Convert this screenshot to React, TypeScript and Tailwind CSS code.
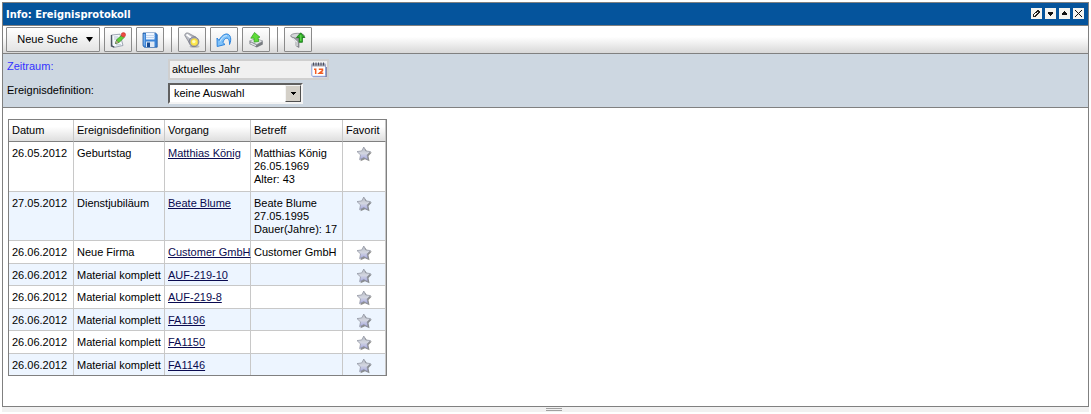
import { useState } from "react";
import type { ReactNode } from "react";

type EventRow = {
  date: string;
  definition: string;
  link: string;
  subject: string[];
};

const ROWS: EventRow[] = [
  { date: "26.05.2012", definition: "Geburtstag", link: "Matthias König", subject: ["Matthias König", "26.05.1969", "Alter: 43"] },
  { date: "27.05.2012", definition: "Dienstjubiläum", link: "Beate Blume", subject: ["Beate Blume", "27.05.1995", "Dauer(Jahre): 17"] },
  { date: "26.06.2012", definition: "Neue Firma", link: "Customer GmbH", subject: ["Customer GmbH"] },
  { date: "26.06.2012", definition: "Material komplett", link: "AUF-219-10", subject: [] },
  { date: "26.06.2012", definition: "Material komplett", link: "AUF-219-8", subject: [] },
  { date: "26.06.2012", definition: "Material komplett", link: "FA1196", subject: [] },
  { date: "26.06.2012", definition: "Material komplett", link: "FA1150", subject: [] },
  { date: "26.06.2012", definition: "Material komplett", link: "FA1146", subject: [] },
];

const COLUMNS = ["Datum", "Ereignisdefinition", "Vorgang", "Betreff", "Favorit"];

function EditIcon() {
  return (
    <svg width="16" height="16" viewBox="0 0 16 16">
      <path d="M1.500 3l8.500-.8 3 11.300-8.500 1.800L2 14z" fill="#f4f7fb" stroke="#8a93a3" strokeWidth=".8" />
      <path d="M1.500 3v11l2.800 1.200" fill="none" stroke="#4b5563" strokeWidth="1.400" />
      <path d="M4 5h4M4 7h3M6 12.800h5" stroke="#a9b8cc" strokeWidth=".8" />
      <path d="M5.500 11.500l1.300-4L12 3l2.300 2.300-5 5z" fill="#5fd03a" stroke="#2c8f20" strokeWidth=".7" />
      <path d="M5.500 11.500l1-3.200 2.200 2.200z" fill="#f0d9a0" stroke="#444" strokeWidth=".5" />
      <circle cx="13.400" cy="2.800" r="2.200" fill="#ee4a42" stroke="#c02a24" strokeWidth=".5" />
    </svg>
  );
}

function SaveIcon() {
  return (
    <svg width="16" height="16" viewBox="0 0 16 16">
      <path d="M1 1h12.500L15.200 2.500v12.700H2.500L1 13.800z" fill="#3d85d8" stroke="#1e55a0" strokeWidth=".8" />
      <path d="M4 1h8.500v6.500H4z" fill="#eef5ff" />
      <path d="M4 3.500h8.500M4 5.500h8.500" stroke="#c4d6ec" />
      <path d="M4 9.500h8.500V15H4z" fill="#dfe8f4" />
      <path d="M5 10.500h3V15H5z" fill="#174a92" />
      <path d="M2.200 2v11.500" stroke="#8fc0f4" />
    </svg>
  );
}

function FlashlightIcon() {
  return (
    <svg width="16" height="16" viewBox="0 0 16 16">
      <ellipse cx="10.500" cy="14.500" rx="5" ry="1.300" fill="#000" opacity=".2" />
      <path d="M.8 3.500C.6 1.500 2.600.3 4.500 1.200l7.500 4-6.500 6z" fill="#b9bcc4" stroke="#85888f" strokeWidth=".8" />
      <path d="M2.500 2.500l6.500 4.700" stroke="#fff" strokeWidth="2" />
      <circle cx="10" cy="9.800" r="4.900" fill="#a9acc0" stroke="#686a78" strokeWidth=".7" />
      <circle cx="10.300" cy="10.100" r="3.500" fill="#ffe94d" stroke="#d9bc2c" strokeWidth=".5" />
      <circle cx="9.800" cy="9.600" r="1.700" fill="#fffbc2" />
    </svg>
  );
}

function UndoIcon() {
  return (
    <svg width="16" height="16" viewBox="0 0 16 16">
      <path
        d="M1 6l2 2.500C5 4.500 8 1.800 11 2c3.800.5 4.800 5.500 2.500 10.500.2-3.800-.8-6.300-2.800-6.300-1.500 0-2.900 1.500-3.900 4.200L9 12.500l-7.800 2z"
        fill="#7fc2fa"
        stroke="#2b82dc"
        strokeLinejoin="round"
      />
      <path d="M4 9.500C6 5.500 8.500 3.500 11 3.700" fill="none" stroke="#cde9ff" />
    </svg>
  );
}

function ExportIcon() {
  return (
    <svg width="16" height="16" viewBox="0 0 16 16">
      <path d="M1.500 9l6.500-2.500L14.800 9v3.500L8.800 15.500 1.500 12z" fill="#777b80" />
      <path d="M1.500 9L8 6.500 14.800 9l-6 3.500z" fill="#e8eaec" stroke="#96999f" strokeWidth=".6" />
      <path d="M2.500 11l5.500 2.700" stroke="#e3e5e8" strokeWidth="1.400" />
      <path d="M6.500.5l5.500 4.700-2 .3.800 4-4.600.6-.3-4-3.100.1z" fill="#5fdc38" stroke="#2c9a1d" strokeWidth=".7" strokeLinejoin="round" />
    </svg>
  );
}

function FilterIcon() {
  return (
    <svg width="16" height="16" viewBox="0 0 16 16">
      <path d="M.8 4l5.200 5.500v4.300l3 1.700v-6L14.500 4z" fill="#94979c" stroke="#6c6f74" strokeWidth=".6" />
      <path d="M2.500 6l4.500 4v4" fill="none" stroke="#eceef0" strokeWidth="1.200" />
      <ellipse cx="7.500" cy="3.700" rx="6.700" ry="2.400" fill="#d4d6d9" stroke="#777a7f" strokeWidth=".7" />
      <path d="M10.700.8l4.200 4.700h-2.500v4.800H9.200V5.500H6.500z" fill="#2fae27" stroke="#127512" strokeWidth=".8" />
      <path d="M10.800 3v6" stroke="#6fe05c" />
    </svg>
  );
}

function CalendarIcon() {
  return (
    <svg width="16" height="16" viewBox="0 0 16 16">
      <path d="M2 14.500h13.500V5" fill="none" stroke="#8688a8" strokeWidth="1.500" />
      <rect x=".8" y="2" width="13.700" height="12.300" rx="1" fill="#fff" stroke="#8fa3dc" />
      <path d="M.5 1.500h14V4.500H.5z" fill="#a4a7b4" />
      <path d="M2.500.5v3M5 .5v3M7.500.5v3M10 .5v3M12.500.5v3" stroke="#4a4d5a" />
      <path d="M3 7.200h1.700V12M7.800 7.200h3.700v1.500L8.300 11.300h4" fill="none" stroke="#f25c22" strokeWidth="1.500" />
    </svg>
  );
}

function StarIcon() {
  return (
    <svg width="16" height="16" viewBox="0 0 16 16">
      <defs>
        <linearGradient id="star" x1="0" y1="0" x2="0" y2="1">
          <stop offset="0" stopColor="#b4b8c2" />
          <stop offset=".5" stopColor="#d3d6e0" />
          <stop offset="1" stopColor="#a6a8e4" />
        </linearGradient>
      </defs>
      <path d="M9 2.500l2.200 3.300 4.600.7-3.300 3.400 1 5.300-4.500-2-4.500 2 1-5z" fill="#444" opacity=".6" />
      <path
        d="M7.800 1l2 3.900 4.700.7-3.400 3.300.9 4.800-4.200-2.100-4.200 2.100.9-4.800L1 5.600l4.700-.7z"
        fill="url(#star)"
        stroke="#8d909e"
        strokeWidth=".7"
        strokeLinejoin="round"
      />
    </svg>
  );
}

function ToolButton({ label, children }: { label: string; children: ReactNode }) {
  return (
    <button
      aria-label={label}
      className="flex h-[25px] w-7 items-center justify-center rounded-[1px] border border-[#8a8a8a] bg-linear-to-b from-white to-[#e4e4e4]"
    >
      {children}
    </button>
  );
}

function Separator() {
  return <div className="mr-0.5 ml-[3px] h-[25px] w-px bg-[#8a8a8a]" />;
}

function WindowButton({ label, children }: { label: string; children: ReactNode }) {
  return (
    <button aria-label={label} className="flex size-[11px] items-center justify-center bg-[#f4f4f0]">
      <svg width="9" height="9" viewBox="0 0 9 9" shapeRendering="crispEdges">
        {children}
      </svg>
    </button>
  );
}

export default function App() {
  const [range, setRange] = useState("aktuelles Jahr");

  return (
    <div className="px-0.5 pt-0.5 font-['Liberation_Sans',Arial,sans-serif] text-[11px] leading-[13px] text-black">
      <main className="border border-[#808080] bg-white">
        {/* Title bar */}
        <header className="flex h-[22px] items-center justify-between bg-[#05549c] pr-1 pl-[3px]">
          <h1 className="font-['DejaVu_Sans_Condensed','DejaVu_Sans',sans-serif] font-bold text-white">Info: Ereignisprotokoll</h1>
          <div className="flex gap-[3px] pb-0.5">
            <WindowButton label="Bearbeiten">
              <path d="M5 1h2v1h1v2H7v1H6v1H5v1H4v1H1V5h1V4h1V3h1V2h1z" fill="#222" />
              <path d="M5 3h1v1H5v1H4v1H3v1H2V5h1V4h2z" fill="#f4f4f0" />
            </WindowButton>
            <WindowButton label="Minimieren">
              <path d="M2 3h5v2H6v1H5v1H4V6H3V5H2z" fill="#111" />
            </WindowButton>
            <WindowButton label="Maximieren">
              <path d="M4 2h1v1h1v1h1v2H2V4h1V3h1z" fill="#111" />
            </WindowButton>
            <WindowButton label="Schließen">
              <path d="M1 1h1v1h1v1h1v1h1V3h1V2h1V1h1v1H7v1H6v1H5v1h1v1h1v1h1v1H7V7H6V6H5V5H4v1H3v1H2v1H1V7h1V6h1V5h1V4H3V3H2V2H1z" fill="#111" />
            </WindowButton>
          </div>
        </header>

        {/* Toolbar */}
        <div className="flex items-center gap-1 border-y border-[#808080] bg-linear-to-b from-white from-40% to-[#d8d8d8] px-[3px] py-px">
          <button className="flex h-[25px] w-[94px] items-center justify-center gap-2 rounded-[1px] border border-[#8a8a8a] bg-linear-to-b from-white to-[#e4e4e4] pl-1">
            Neue Suche
            <svg width="7" height="5" viewBox="0 0 7 5">
              <path d="M0 0h7L3.500 5z" fill="#000" />
            </svg>
          </button>
          <ToolButton label="Suche bearbeiten"><EditIcon /></ToolButton>
          <ToolButton label="Speichern"><SaveIcon /></ToolButton>
          <Separator />
          <ToolButton label="Suchen"><FlashlightIcon /></ToolButton>
          <ToolButton label="Zurücksetzen"><UndoIcon /></ToolButton>
          <ToolButton label="Exportieren"><ExportIcon /></ToolButton>
          <Separator />
          <ToolButton label="Filter"><FilterIcon /></ToolButton>
        </div>

        {/* Search criteria */}
        <form className="grid grid-cols-[161px_1fr] items-start gap-y-[3px] border-b border-[#808080] bg-[#cdd7e1] pt-[5px] pb-[3px] pl-1">
          <label htmlFor="range" className="pt-px text-[#3333ff]">Zeitraum:</label>
          <div className="flex h-[21px] w-[161px] items-center border-2 border-[#cfcfcf] bg-[#f0f0f0]">
            <input
              id="range"
              value={range}
              onChange={(e) => setRange(e.target.value)}
              className="min-w-0 flex-1 bg-transparent pl-0.5 outline-none"
            />
            <button type="button" aria-label="Kalender"><CalendarIcon /></button>
          </div>
          <label htmlFor="definition" className="pt-px">Ereignisdefinition:</label>
          <div className="relative w-[135px]">
            <select
              id="definition"
              className="block h-[21px] w-full appearance-none border-2 border-t-[#606060] border-r-[#f4f4f4] border-b-[#f4f4f4] border-l-[#606060] bg-white pl-1 outline-none"
            >
              <option>keine Auswahl</option>
            </select>
            <span className="pointer-events-none absolute top-0.5 right-0.5 flex h-[17px] w-4 items-center justify-center border border-t-[#f4f4f4] border-r-[#505050] border-b-[#505050] border-l-[#f4f4f4] bg-[#d4d0c8]">
              <svg width="5" height="3" viewBox="0 0 5 3" shapeRendering="crispEdges">
                <path d="M0 0h5v1H4v1H3v1H2V2H1V1H0z" />
              </svg>
            </span>
          </div>
        </form>

        {/* Event log */}
        <section className="px-[5px] pt-[11px] pb-[30px]">
          <table className="w-[379px] table-fixed border-separate border-spacing-0 border border-[#808080]">
            <colgroup>
              <col className="w-[65px]" />
              <col className="w-[91px]" />
              <col className="w-[86px]" />
              <col className="w-[92px]" />
              <col className="w-[43px]" />
            </colgroup>
            <thead>
              <tr className="h-[22px] bg-linear-to-b from-white from-30% to-[#dcdcdc]">
                {COLUMNS.map((column) => (
                  <th
                    key={column}
                    className="border-r border-b border-r-[#c8c8c8] border-b-[#808080] pl-[3px] text-left font-normal whitespace-nowrap"
                  >
                    {column}
                  </th>
                ))}
              </tr>
            </thead>
            <tbody className="[&_td]:border-r [&_td]:border-b [&_td]:border-[#c8c8c8] [&_td]:pt-[5px] [&_td]:pl-[3px] [&_td]:align-top [&_td]:whitespace-nowrap [&_tr:last-child_td]:border-b-0">
              {ROWS.map((row, i) => (
                <tr
                  key={row.link}
                  className={
                    row.subject.length > 1
                      ? "odd:h-[50px] even:h-[49px] even:bg-[#edf5ff]"
                      : "odd:h-[23px] even:h-[22px] even:bg-[#edf5ff] even:last:h-[21px]"
                  }
                >
                  <td>{row.date}</td>
                  <td>{row.definition}</td>
                  <td>
                    <a href={`#vorgang-${i}`} className="text-[#0a0a50] underline">{row.link}</a>
                  </td>
                  <td>
                    {row.subject.map((line) => (
                      <div key={line}>{line}</div>
                    ))}
                  </td>
                  <td>
                    <button aria-label="Favorit" className="mx-auto -mt-px -mb-1 block h-4 pr-1">
                      <StarIcon />
                    </button>
                  </td>
                </tr>
              ))}
            </tbody>
          </table>
        </section>
      </main>

      {/* Splitter */}
      <div className="flex h-[5px] flex-col items-center justify-center gap-px bg-[#f1f1f1] pl-4">
        <div className="h-px w-4 bg-[#a0a0a0]" />
        <div className="h-px w-4 bg-[#a0a0a0]" />
      </div>
    </div>
  );
}
